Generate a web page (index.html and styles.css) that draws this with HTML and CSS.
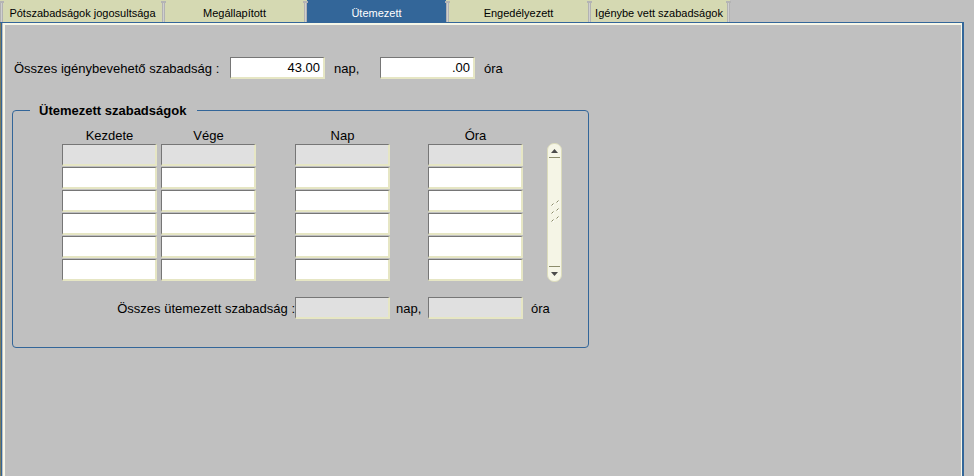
FILE: index.html
```html
<!DOCTYPE html>
<html lang="hu">
<head>
<meta charset="utf-8">
<title>Ütemezett</title>
<link rel="stylesheet" href="styles.css">
</head>
<body>
<div class="tabbar">
  <span class="post"></span>
  <div class="tab t1">Pótszabadságok jogosultsága</div>
  <span class="post"></span>
  <div class="tab">Megállapított</div>
  <span class="post"></span>
  <div class="tab active">Ütemezett</div>
  <span class="post"></span>
  <div class="tab">Engedélyezett</div>
  <span class="post"></span>
  <div class="tab t5">Igénybe vett szabadságok</div>
  <span class="post"></span>
</div>
<div class="frame">
  <div class="total">
    <span class="lbl-total">Összes igénybevehető szabadság :</span>
    <input class="fld" type="text" value="43.00" readonly>
    <span class="unit-nap">nap,</span>
    <input class="fld" type="text" value=".00" readonly>
    <span class="unit-ora">óra</span>
  </div>
  <fieldset class="group">
    <legend>Ütemezett szabadságok</legend>
    <div class="cols">
      <div class="col">
        <div class="hdr">Kezdete</div>
        <input class="fld ro" type="text" readonly>
        <input class="fld" type="text" readonly>
        <input class="fld" type="text" readonly>
        <input class="fld" type="text" readonly>
        <input class="fld" type="text" readonly>
        <input class="fld" type="text" readonly>
      </div>
      <div class="col">
        <div class="hdr">Vége</div>
        <input class="fld ro" type="text" readonly>
        <input class="fld" type="text" readonly>
        <input class="fld" type="text" readonly>
        <input class="fld" type="text" readonly>
        <input class="fld" type="text" readonly>
        <input class="fld" type="text" readonly>
      </div>
      <div class="col c3">
        <div class="hdr">Nap</div>
        <input class="fld ro" type="text" readonly>
        <input class="fld" type="text" readonly>
        <input class="fld" type="text" readonly>
        <input class="fld" type="text" readonly>
        <input class="fld" type="text" readonly>
        <input class="fld" type="text" readonly>
      </div>
      <div class="col c4">
        <div class="hdr">Óra</div>
        <input class="fld ro" type="text" readonly>
        <input class="fld" type="text" readonly>
        <input class="fld" type="text" readonly>
        <input class="fld" type="text" readonly>
        <input class="fld" type="text" readonly>
        <input class="fld" type="text" readonly>
      </div>
      <div class="scroll">
        <svg width="15" height="139" viewBox="0 0 15 139">
          <rect x="0.5" y="0.5" width="14" height="138" rx="6.5" fill="#f5f5e6" stroke="#dcdcbc"/>
          <path d="M4 10 L11 10 L7.5 6 Z" fill="#4a4a4a"/>
          <rect x="2" y="14" width="11" height="1" fill="#8c8c6c"/>
          <rect x="2" y="123" width="11" height="1" fill="#8c8c6c"/>
          <path d="M4 129 L11 129 L7.5 133 Z" fill="#4a4a4a"/>
          <g stroke="#8a8a6a" stroke-width="1" fill="none">
            <path d="M4.5 62.5 L6.5 60.5"/>
            <path d="M9.5 59.5 L11.5 57.5"/>
            <path d="M4.5 70.5 L6.5 68.5"/>
            <path d="M9.5 67.5 L11.5 65.5"/>
            <path d="M4.5 78.5 L6.5 76.5"/>
            <path d="M9.5 75.5 L11.5 73.5"/>
          </g>
          <g fill="#ffffff">
            <rect x="6" y="62" width="1" height="1"/>
            <rect x="11" y="59" width="1" height="1"/>
            <rect x="6" y="70" width="1" height="1"/>
            <rect x="11" y="67" width="1" height="1"/>
            <rect x="6" y="78" width="1" height="1"/>
            <rect x="11" y="75" width="1" height="1"/>
          </g>
        </svg>
      </div>
    </div>
    <div class="sumrow">
      <span class="lbl-sum">Összes ütemezett szabadság :</span>
      <input class="fld ro" type="text" readonly>
      <span class="unit-sum-nap">nap,</span>
      <input class="fld ro" type="text" readonly>
      <span class="unit-sum-ora">óra</span>
    </div>
  </fieldset>
</div>
</body>
</html>
```

FILE: styles.css
```css
html, body {
  margin: 0;
  padding: 0;
  background: #c0c0c0;
  overflow: hidden;
}

body {
  font-family: "Liberation Sans", Arial, sans-serif;
  font-size: 13px;
  color: #000;
  width: 974px;
  height: 476px;
}

/* ---------- tabs ---------- */
.tabbar {
  display: flex;
  height: 22px;
  width: 730px;
  background: #d5d9b2;
}

.tab {
  width: 139px;
  height: 22px;
  box-sizing: border-box;
  padding-top: 7px;
  line-height: 13px;
  font-size: 11px;
  text-align: center;
  color: #000;
  white-space: nowrap;
}

.tab.t1 { width: 159px; }
.tab.t5 { width: 136px; }

.tab.active {
  background: #336699;
  color: #fff;
}

.post {
  position: relative;
  width: 3px;
  height: 21px;
  margin-top: 1px;
  background: linear-gradient(to right, #a4a4a4, #cfcfcf 50%, #a4a4a4);
}

.post::before {
  content: "";
  position: absolute;
  top: 0;
  left: -1px;
  width: 5px;
  height: 2px;
  background: #b4b4b4;
}

/* ---------- frame ---------- */
.frame {
  width: 964px;
  height: 460px;
  box-sizing: border-box;
  border-top: 1px solid #336699;
  border-right: 2px solid #336699;
  padding-left: 12px;
  box-shadow:
    inset 1px 0 0 #7c7c5c,
    inset 2px 0 0 #336699,
    inset 3px 0 0 #c0c0c0,
    inset 5px 0 0 #f7f7e8,
    inset 0 2px 0 #f7f7e8,
    inset -1px 0 0 #f7f7e8;
}

.fld {
  display: block;
  width: 95px;
  height: 22px;
  box-sizing: border-box;
  margin: 0;
  padding: 0 3px 0 2px;
  border-style: solid;
  border-width: 1px 2px 2px 1px;
  border-color: #767676 #e6e6c4 #e6e6c4 #767676;
  background: #fff;
  font-family: "Liberation Sans", Arial, sans-serif;
  font-size: 13px;
  color: #000;
  text-align: right;
  outline: none;
}

.fld.ro {
  background: #e0e0e0;
}

.total {
  display: flex;
  align-items: center;
  height: 22px;
  margin-top: 34px;
  padding-left: 2px;
}

.lbl-total {
  width: 216px;
  white-space: nowrap;
}

.unit-nap {
  width: 46px;
  margin-left: 9px;
}

.unit-ora {
  margin-left: 9px;
}

/* ---------- group ---------- */
.group {
  width: 577px;
  box-sizing: border-box;
  margin: 24px 0 0 0;
  padding: 0 0 28px 0;
  border: 1px solid #336699;
  border-radius: 4px;
}

.group legend {
  margin-left: 17px;
  padding: 0 11px 0 9px;
  font-weight: bold;
  font-size: 13px;
  line-height: 15px;
}

.cols {
  display: flex;
  gap: 4px;
  margin: 10px 0 0 49px;
}

.col {
  width: 95px;
  display: flex;
  flex-direction: column;
  gap: 1px;
}

.col.c3 { margin-left: 35px; }
.col.c4 { margin-left: 34px; }

.hdr {
  height: 16px;
  line-height: 16px;
  margin-bottom: -1px;
  text-align: center;
  white-space: nowrap;
}

.scroll {
  width: 15px;
  height: 139px;
  margin-left: 20px;
  margin-top: 15px;
}

.scroll svg {
  display: block;
}

.sumrow {
  display: flex;
  align-items: center;
  height: 22px;
  margin-top: 15px;
}

.lbl-sum {
  width: 282px;
  text-align: right;
  white-space: nowrap;
}

.unit-sum-nap {
  width: 32px;
  margin-left: 6px;
}

.unit-sum-ora {
  margin-left: 8px;
}
```
